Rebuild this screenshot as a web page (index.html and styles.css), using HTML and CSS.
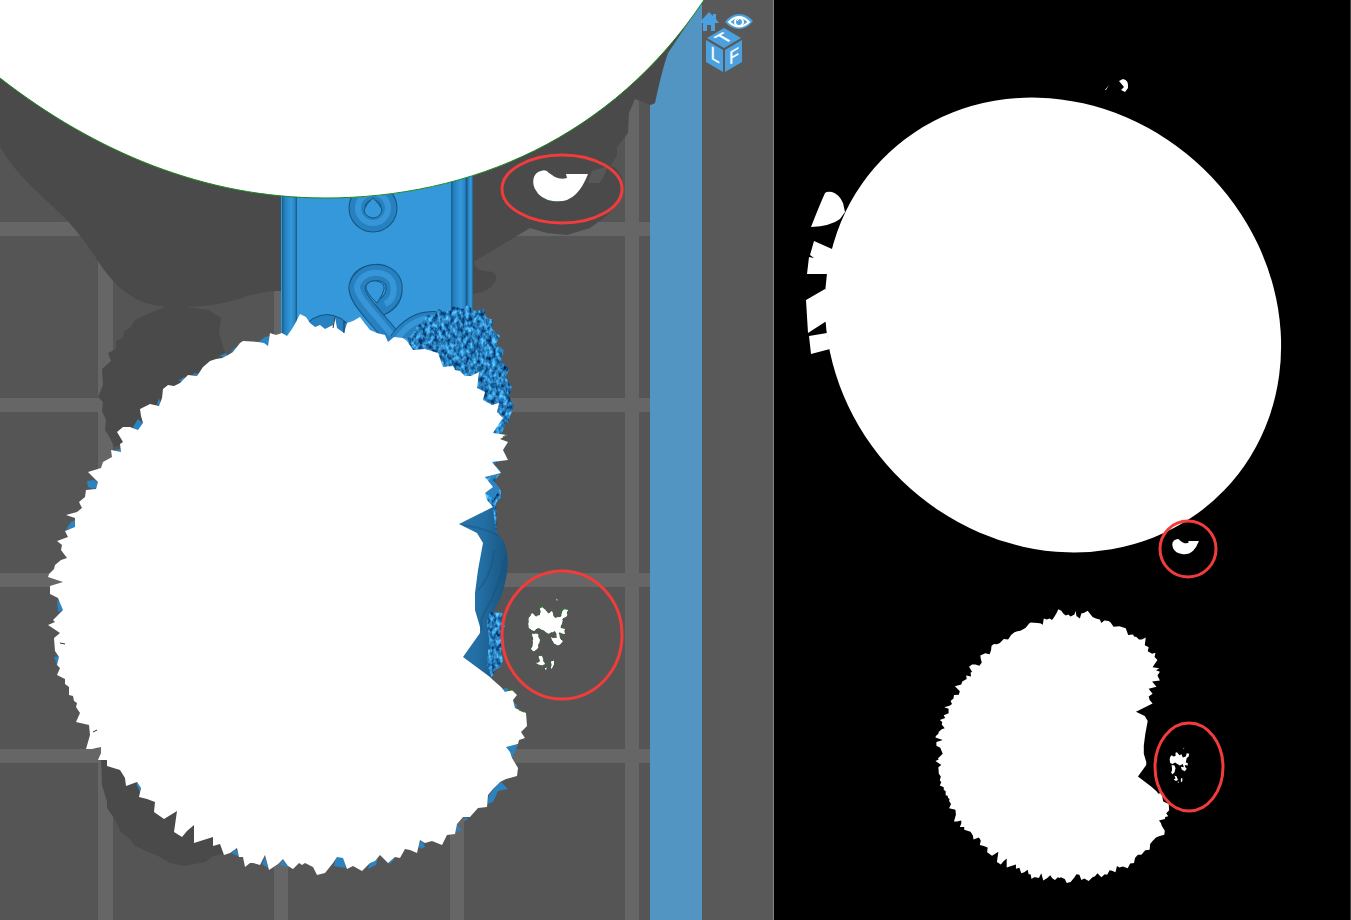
FILE: index.html
```html
<!DOCTYPE html>
<html lang="en">
<head>
<meta charset="utf-8">
<title>Slice preview</title>
<link rel="stylesheet" href="styles.css">
</head>
<body>
<main class="viewer">
  <section class="scene" aria-label="Model view">
    <svg class="canvas" viewBox="0 0 774 920" preserveAspectRatio="xMinYMin slice">
      <defs>
        <filter id="fur" x="0" y="0" width="100%" height="100%" color-interpolation-filters="sRGB">
          <feTurbulence type="fractalNoise" baseFrequency="0.26 0.18" numOctaves="3" seed="8"/>
          <feColorMatrix values="0.6 0 0 0 -0.14  1.1 0 0 0 -0.06  1.2 0 0 0 0.13  0 0 0 0 1"/>
          <feComposite in2="SourceGraphic" operator="in"/>
        </filter>
        <linearGradient id="rail">
          <stop offset="0" stop-color="#175e8e"/><stop offset=".2" stop-color="#2681c0"/>
          <stop offset=".6" stop-color="#3498db"/><stop offset=".85" stop-color="#2b86c5"/><stop offset="1" stop-color="#16547f"/>
        </linearGradient>
        <linearGradient id="ear" x1="0" y1="0" x2="1" y2="0.2">
          <stop offset="0" stop-color="#2676ae"/><stop offset=".5" stop-color="#236fa5"/><stop offset="1" stop-color="#185580"/>
        </linearGradient>
        <path id="body" d="M300 314L296 322 292 329 287 336 282 333 276 335 270 333 268 346 264 343 258 342 243 341 240 343 233 352 228 355 222 358 216 359 210 361 203 367 197 376 188 375 180 383 174 386 168 385 163 389 162 398 159 406 150 404 140 409 141 416 143 423 138 430 130 427 123 427 117 432 123 442 120 444 121 452 111 450 112 457 103 462 101 468 88 472 98 482 96 489 86 490 85 497 79 502 82 508 77 512 66 515 75 518 75 527 65 531 68 537 57 541 62 545 61 550 67 558 61 560 55 565 54 569 49 574 48 577 63 582 50 586 50 594 58 598 60 603 63 610 53 620 55 622 48 625 60 633 54 638 55 651 59 657 57 665 60 668 57 675 65 679 65 684 69 687 69 695 73 696 74 701 77 703 76 707 80 713 76 722 89 725 90 735 86 749 92 749 101 747 101 753 98 760 107 760 107 766 120 770 125 778 126 786 137 782 141 788 139 797 147 799 155 802 154 812 164 819 177 811 174 832 182 837 187 831 194 825 194 843 213 837 213 846 220 844 224 855 230 853 237 848 239 857 243 857 245 867 250 863 253 863 260 865 265 855 269 870 278 864 283 859 288 866 293 869 299 863 302 865 305 863 313 867 317 875 325 873 333 863 337 857 343 858 347 869 353 866 362 871 370 863 375 861 380 855 388 863 395 857 400 858 405 849 410 850 417 853 420 840 425 843 432 841 442 845 447 835 455 834 457 824 463 817 470 817 478 808 487 807 488 795 493 789 500 782 506 779 517 776 518 768 512 758 510 752 506 747 518 744 519 740 525 738 521 732 527 726 526 713 515 708 513 700 517 695 512 690 505 692 501 687 493 680 490 677 463 657 480 633 480 627 475 610 475 593 478 570 483 543 477 533 459 524 493 507 487 500 485 493 493 487 485 477 501 473 492 462 508 460 503 450 508 442 500 439 507 435 493 433 498 425 503 418 497 412 499 403 492 405 483 400 485 392 477 388 479 372 471 376 465 376 460 371 455 370 453 366 443 367 438 353 425 349 413 350 407 341 403 338 394 337 388 342 385 335 377 333 370 330 366 325 360 317 353 321 347 323 344 333 337 328 335 317 333 325 325 329 320 325 315 327 310 323 306 317Z"/>
        <path id="chip" d="M534 177Q536 172 541 171Q546 169 549 173L555 177Q561 180 567 178L566 174 588 174Q583 187 576 194Q567 203 553 201Q540 199 535 189Q532 183 534 177Z"/>
        <g id="crumbs">
          <path d="M529 617L532 613 536 616 540 615 540 608 543 607 548 613 552 611 555 618 561 616 563 609 568 610 567 616 563 619 561 628 565 629 565 634 559 633 560 638 563 641 559 646 553 643 551 637 557 638 555 631 549 634 542 630 539 628 534 631 529 629 528 622Z"/>
          <path d="M532 633L538 634 540 640 538 648 534 652 531 649 533 643Z"/>
          <path d="M538 655L542 656 545 664 541 666 536 663 540 661ZM551 661L554 660 554 666 551 669ZM544 668L547 667 546 670ZM556 598L558 599 557 601Z"/>
        </g>
      </defs>

      <rect class="floor" width="774" height="920"/>
      <path class="grid-line" d="M98 0h15v920H98zM274 0h14v920h-14zM450 0h14v920h-14zM625 0h14v920h-14zM0 222h650v14H0zM0 398h650v14H0zM0 573h650v14H0zM0 749h650v14H0z"/>
      <rect class="outside" x="702" width="72" height="920"/>
      <rect class="wall" x="650" width="52" height="920"/>
      <g class="shadow">
        <path d="M0 60V147Q12 167 30 185L66 219Q84 239 98 261Q115 288 138 300Q155 308 180 307Q215 307 242 298Q265 290 281 291L473 262 497 248 530 228 547 233 567 235 590 228 605 217 617 205 622 192 622 177 615 167 610 167 617 155 617 147 628 133 629 113 635 99 651 105 655 103Q662 70 668 53L690 20 700 0Z"/>
        <path d="M473 260Q476 271 484 271L493 272Q497 275 496 280Q490 292 473 294Z"/>
        <path d="M170 305L150 313 135 320 130 328 124 331 123 338 116 341 116 349 108 353 111 361 102 369 103 385 98 397 103 402 102 411 106 420 105 430 110 438 114 447 240 400 224 350 219 333 221 318 209 310Z"/>
        <path d="M101 755L102 785 107 802 107 808 114 818 121 832 130 839 135 846 160 857 170 863 185 866 205 862 213 856 240 850 150 770Z"/>
      </g>
      <path class="lit" d="M588 183L592 171 608 166 603 178 599 183Z"/>

      <rect class="strap" x="281" y="150" width="192" height="200"/>
      <rect x="282" y="150" width="15" height="200" fill="url(#rail)"/>
      <rect x="451" y="150" width="16" height="200" fill="url(#rail)"/>
      <rect x="467" y="150" width="6" height="200" fill="url(#rail)"/>
      <g class="loop">
        <circle class="loop-edge" cx="373" cy="208" r="16"/><circle class="loop-body" cx="373" cy="208" r="16"/><circle class="loop-shine" cx="373" cy="208" r="15"/>
        <path class="loop-hole" d="M373 198Q381 206 382 210Q380 218 373 218Q365 217 364 210Q366 204 373 198Z"/>
        <path class="loop-edge" d="M308 334Q327 311 346 334"/><path class="loop-body" d="M308 334Q327 311 346 334"/>
        <path class="loop-edge" d="M380 308Q396 301 394 285C390 268 361 268 357 286"/>
        <path class="loop-body" d="M378 309Q396 301 394 285C390 268 361 268 357 287"/>
        <path class="loop-shine" d="M385 304Q396 299 393 284C388 268 361 269 357 287"/>
        <path class="loop-edge" d="M357 286C355 298 372 312 396 342"/>
        <path class="loop-body" d="M357 285C355 298 372 312 396 342"/>
        <path class="loop-shine" d="M357 285C356 297 372 310 396 340"/>
        <path class="loop-hole" d="M377 303Q365 292 366 286Q369 280 377 281Q385 283 384 289Q383 294 377 303Z"/>
        <path class="loop-edge" d="M397 341Q414 316 440 320"/><path class="loop-body" d="M396 342Q414 316 440 320"/><path class="loop-shine" d="M397 339Q414 315 440 318"/>
      </g>
      <path class="fur" d="M422 323L427 315 434 316 438 309 446 312 453 306 463 309 468 305 474 311 484 309 486 317 493 320 492 329 500 336 496 344 504 350 501 360 509 369 506 378 512 387 509 397 514 405 510 417 508 423 498 427 480 420 440 390 398 342 412 335 415 328Z"/>
      <path class="fur" d="M487 420L507 412 504 428 499 440 504 458 492 466 500 474 494 482 501 490 501 498 496 503 497 535 486 530 475 490Z"/>
      <path class="ear" d="M459 524L493 507 496 533Q507 539 508 563Q506 590 496 607L488 623 492 679 463 657 480 633 470 590Z"/>
      <path class="ear-fold" d="M482 630Q479 620 486 610Q500 585 505 558M478 590Q492 575 494 550M460 525Q478 526 498 535"/>
      <path class="fur" d="M490 612L503 613 501 620 505 626 501 634 504 643 501 652 503 660 501 667 495 670 492 678 487 664 489 640 487 622Z"/>
      <path class="peek" d="M258 342L265 337 269 336 270 347zM231 351L236 347 237 354zM219 356L226 353 228 358zM192 374L197 373 199 377zM178 381L184 377 187 381zM157 404L159 398 162 407zM133 427L138 419 144 424 139 432zM114 450L120 449 122 454zM104 462L110 459 111 463zM87 481L94 480 100 484 94 489 88 487zM66 529L71 522 77 519 76 530zM57 600L60 602 64 610 58 612zM54 657L61 656 57 665zM136 783L141 785 140 792zM231 853L236 849 240 857zM262 864L265 857 268 868zM279 865L283 860 288 867zM334 866L336 857 343 856 346 868zM368 869L370 862 378 857 376 865zM387 862L395 858 390 864zM418 846L422 839 425 847 421 849zM456 832L457 825 462 830zM463 822L465 817 468 819zM487 804L489 795 500 781 508 789 498 791 493 802zM505 746L518 745 512 758zM512 701L517 705 516 709zM500 689L508 688 507 693zM496 466L501 471 493 480 500 489 493 500 484 490z"/>
      <use class="white" href="#body"/>
      <path class="split" d="M335 317l-2 11M344 321v12M93 732l4-2M60 643l5 1"/>
      <path class="disc" d="M0 78C95 152 205 198 325 198C470 198 612 138 704 0H0Z"/>
      <path class="trace" d="M0 78C95 152 205 198 325 198C470 198 612 138 704 0M534 184L537 191 544 198 553 201 568 199"/>
      <use class="white" href="#chip"/>
      <use class="white crumb-edge" href="#crumbs"/>
      <path class="trace" d="M503 437l3-2M508 690l6 0M519 710l5 2M540 608l3-2M562 609l5-1"/>
      <ellipse class="ring" cx="562" cy="189" rx="60" ry="34"/>
      <ellipse class="ring" cx="562" cy="635" rx="60" ry="64"/>
    </svg>
    <nav class="tools" aria-label="View controls">
      <button class="tool" aria-label="Home view"><svg width="20" height="20" viewBox="0 0 20 20"><path d="M10 1L14 5V3H17V8L20 12H16V20H12V14H8V20H4V12H0Z"/></svg></button>
      <button class="tool" aria-label="Visibility"><svg width="28" height="20" viewBox="0 0 28 20"><path d="M0 11Q6 3 14 3Q22 3 28 10Q22 18 14 18Q6 18 0 11Z"/><path class="eye-line" d="M4 11Q14 1 24 11Q14 20 4 11Z"/><circle class="eye-line" cx="14" cy="11" r="4"/><path class="eye-glint" d="M12 10l2-2"/></svg></button>
      <button class="tool cube" aria-label="Orientation"><svg width="38" height="46" viewBox="0 0 38 46"><path d="M19 0L36 10 19 20 2 10ZM1 12L18 22V44L1 34ZM37 12L20 22V44L37 34Z"/><text class="face" transform="matrix(.87 .5 0 1 10 33)">L</text><text class="face" transform="matrix(.87 -.5 0 1 29 34)">F</text><text class="face" transform="matrix(.87 -.5 .87 .5 24 13)">T</text></svg></button>
    </nav>
  </section>

  <section class="mask" aria-label="Layer mask">
    <svg class="canvas" viewBox="0 0 577 920" preserveAspectRatio="xMinYMin slice">
      <ellipse class="white" cx="279" cy="325" rx="238" ry="217" transform="rotate(44 279 325)"/>
      <path class="white" d="M58 192Q65 194 69 203L71 212 66 219Q57 226 37 227Q46 204 51 193Q53 191 58 192ZM40 241L58 249 60 274H33L35 257 40 258 36 255ZM32 300L51 289 60 300 58 321 51 322 34 333ZM35 336L53 333 56 349 37 354Z"/>
      <path class="white" d="M349 79Q355 80 354 88L351 92 347 90 350 87 345 81ZM331 90L335 85 332 90Z"/>
      <g class="white" transform="translate(138 456) scale(.488)">
        <use href="#body"/><use href="#chip"/><use href="#crumbs"/>
      </g>
      <ellipse class="ring" cx="414" cy="549" rx="28" ry="28"/>
      <ellipse class="ring" cx="415" cy="767" rx="34" ry="44"/>
    </svg>
  </section>
</main>
</body>
</html>
```

FILE: styles.css
```css
body { margin: 0; background: #000; font-family: "Liberation Sans", Arial, sans-serif; }
.viewer { display: grid; grid-template-columns: 774fr 577fr; height: 100vh; overflow: hidden; }
.viewer > section { box-sizing: border-box; overflow: hidden; }
.scene { position: relative; background: #595959; border-right: 1px solid #858585; }
.mask { background: #000; border-right: 1px solid #444; }
.canvas { display: block; width: 100%; height: 100%; }

.floor { fill: #555; }
.grid-line { fill: #666; }
.outside { fill: #595959; }
.wall { fill: #5294c2; }
.shadow { fill: #4a4a4a; }
.lit { fill: #585858; }
.white, .disc { fill: #fff; }
.strap { fill: #3498db; }

.loop path, .loop circle { fill: none; stroke-linecap: butt; }
.loop .loop-edge { stroke: #16547f; stroke-width: 17; }
.loop .loop-body { stroke: #2780bf; stroke-width: 15; }
.loop .loop-shine { stroke: #3696d8; stroke-width: 6; }
.loop .loop-hole { fill: #3498db; stroke: #16547f; stroke-width: 1; }

.fur { fill: #2b8bce; filter: url(#fur); }
.ear { fill: url(#ear); }
.ear-fold { fill: none; stroke: #174f78; stroke-width: 2; opacity: .4; }
.peek { fill: #2b83bf; }
.split { fill: none; stroke: #163b55; stroke-width: 1; }
.trace { fill: none; stroke: #1d8a1d; stroke-width: 1; }
.crumb-edge { stroke: #1f6a25; stroke-width: 1; stroke-dasharray: 3 5; }
.ring { fill: none; stroke: #f23c3c; stroke-width: 3; }

.tools { position: absolute; top: 11px; right: 20px; display: grid; grid-template-columns: 20px 28px; column-gap: 6px; justify-items: start; }
.tool { display: block; padding: 0; border: 0; background: none; fill: #4ba1df; cursor: pointer; }
.tool svg { display: block; }
.cube { grid-column: 1 / -1; margin: -3px 0 0 6px; }
.face { fill: #fff; stroke: #fff; stroke-width: 0.4; font-size: 18px; text-anchor: middle; }
.eye-line { fill: none; stroke: #fff; stroke-width: 2; }
.eye-glint { stroke: #fff; stroke-width: 1; }
```
